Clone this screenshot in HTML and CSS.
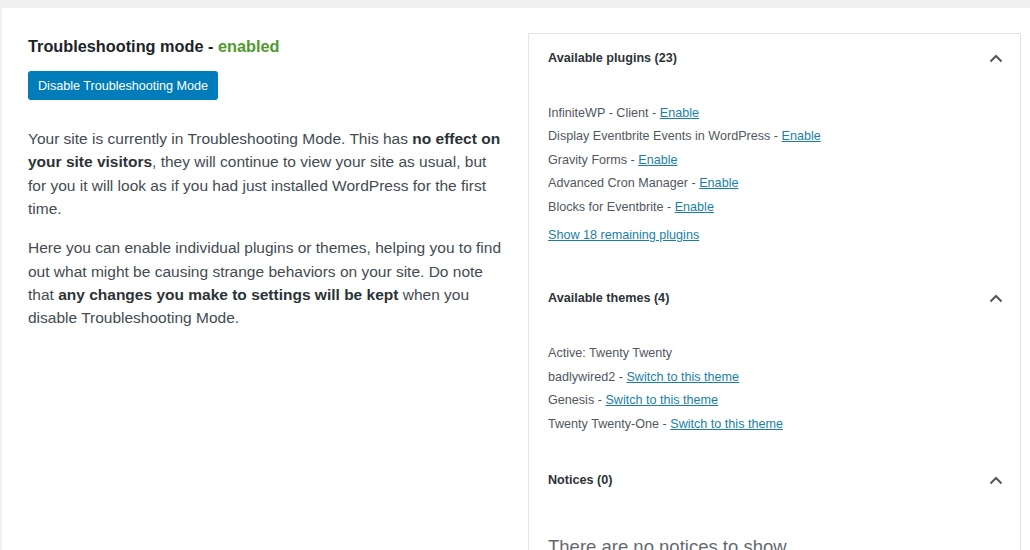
FILE: index.html
```html
<!DOCTYPE html>
<html lang="en">
<head>
<meta charset="utf-8">
<title>Troubleshooting mode</title>
<link rel="stylesheet" href="styles.css">
</head>
<body>
<div class="wrap">
  <div class="layout">
    <section class="intro">
      <h2 class="intro-title">Troubleshooting mode - <span class="status-on">enabled</span></h2>
      <button class="btn-primary" type="button">Disable Troubleshooting Mode</button>
      <p class="intro-text">Your site is currently in Troubleshooting Mode. This has <strong>no effect on your site visitors</strong>, they will continue to view your site as usual, but for you it will look as if you had just installed WordPress for the first time.</p>
      <p class="intro-text">Here you can enable individual plugins or themes, helping you to find out what might be causing strange behaviors on your site. Do note that <strong>any changes you make to settings will be kept</strong> when you disable Troubleshooting Mode.</p>
    </section>

    <aside class="panel">
      <div class="acc-section">
        <h3 class="acc-head">
          <span>Available plugins (23)</span>
          <svg class="chev" width="14" height="9" viewBox="0 0 14 9"><path d="M1.5 7.5 L7 2 L12.5 7.5" fill="none" stroke="#50575e" stroke-width="2"/></svg>
        </h3>
        <ul class="acc-list">
          <li>InfiniteWP - Client - <a href="#">Enable</a></li>
          <li>Display Eventbrite Events in WordPress - <a href="#">Enable</a></li>
          <li>Gravity Forms - <a href="#">Enable</a></li>
          <li>Advanced Cron Manager - <a href="#">Enable</a></li>
          <li>Blocks for Eventbrite - <a href="#">Enable</a></li>
        </ul>
        <p class="show-more"><a href="#">Show 18 remaining plugins</a></p>
      </div>

      <div class="acc-section">
        <h3 class="acc-head">
          <span>Available themes (4)</span>
          <svg class="chev" width="14" height="9" viewBox="0 0 14 9"><path d="M1.5 7.5 L7 2 L12.5 7.5" fill="none" stroke="#50575e" stroke-width="2"/></svg>
        </h3>
        <ul class="acc-list">
          <li>Active: Twenty Twenty</li>
          <li>badlywired2 - <a href="#">Switch to this theme</a></li>
          <li>Genesis - <a href="#">Switch to this theme</a></li>
          <li>Twenty Twenty-One - <a href="#">Switch to this theme</a></li>
        </ul>
      </div>

      <div class="acc-section">
        <h3 class="acc-head">
          <span>Notices (0)</span>
          <svg class="chev" width="14" height="9" viewBox="0 0 14 9"><path d="M1.5 7.5 L7 2 L12.5 7.5" fill="none" stroke="#50575e" stroke-width="2"/></svg>
        </h3>
        <p class="empty-note">There are no notices to show</p>
      </div>
    </aside>
  </div>
</div>
</body>
</html>
```

FILE: styles.css
```css
html, body {
  margin: 0;
  padding: 0;
}

body {
  background: #f0f0f1;
  font-family: "Liberation Sans", Arial, sans-serif;
  color: #3c434a;
  height: 550px;
  overflow: hidden;
}

.wrap {
  margin: 8px 0 0 2px;
  background: #fff;
  min-height: 560px;
  padding: 25px 9px 0 26px;
}

.layout {
  display: grid;
  grid-template-columns: 477px 1fr;
  column-gap: 23px;
  align-items: start;
}

/* Left column */
.intro-title {
  margin: 2px 0 0;
  font-size: 16.3px;
  line-height: 22px;
  font-weight: 700;
  color: #1d2327;
}

.status-on {
  color: #4f9a2c;
}

.btn-primary {
  margin-top: 14px;
  display: block;
  height: 29px;
  padding: 0 10px;
  border: 0;
  border-radius: 3px;
  background: #007cba;
  color: #fff;
  font-family: inherit;
  font-size: 12.6px;
}

.intro-text {
  margin: 27px 0 0;
  font-size: 15.5px;
  line-height: 23.4px;
  color: #444b52;
}

.intro-text + .intro-text {
  margin-top: 15.5px;
}

.intro-text strong {
  color: #2c3338;
}

/* Right column: accordion panel */
.panel {
  border: 1px solid #e2e4e7;
  border-bottom: 0;
  min-height: 540px;
}

.acc-section {
  padding: 0 19px;
}

.acc-head {
  margin: 0;
  display: flex;
  align-items: center;
  justify-content: space-between;
  font-size: 12.6px;
  line-height: 20px;
  font-weight: 700;
  color: #2c3338;
}

.acc-section:first-child .acc-head {
  padding-top: 14px;
}

.chev {
  display: block;
  margin-right: -2px;
}

.acc-list {
  list-style: none;
  margin: 34px 0 0;
  padding: 0;
}

.acc-list li {
  font-size: 12.6px;
  line-height: 23.4px;
  color: #50575e;
}

a {
  color: #1a7fa8;
  text-decoration: underline;
}

.show-more {
  margin: 5px 0 0;
  font-size: 12.6px;
  line-height: 23.4px;
  padding-bottom: 41px;
}

.acc-section:nth-child(2) .acc-list {
  padding-bottom: 34px;
}

.empty-note {
  margin: 43px 0 0;
  font-size: 18.5px;
  line-height: 27px;
  color: #646970;
}
```
